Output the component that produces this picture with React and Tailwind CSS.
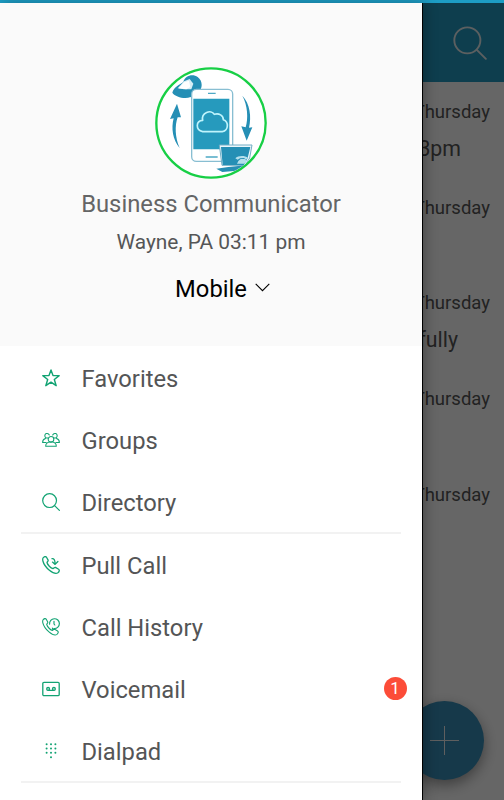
import React from 'react';

const strokeProps = {
  fill: 'none',
  stroke: 'currentColor',
  strokeLinecap: 'round',
  strokeLinejoin: 'round',
};

const StarIcon = () => (
  <svg className="size-[18px]" viewBox="0 0 18 18" strokeWidth="1.4" {...strokeProps}>
    <path d="M9 .9 11 6.6H17.2L12.3 10.5 14.2 16.7 9 13.1 3.8 16.7 5.7 10.5.8 6.6H7Z" />
  </svg>
);

const GroupsIcon = () => (
  <svg className="size-[18px]" viewBox="0 0 18 18" strokeWidth="1.05" {...strokeProps}>
    <circle cx="9" cy="8.3" r="2.8" />
    <path d="M6 6.9A2.3 2.3 0 1 1 7.3 4M10.7 4A2.3 2.3 0 1 1 12 6.9" />
    <path d="M3.7 15.2C3.7 12.8 4.8 11.6 7.2 11H10.8C13.2 11.6 14.3 12.8 14.3 15.2Z" />
    <path d="M4.2 11.5H.6C.6 9.6 1.5 8.1 3.6 7.6M13.8 11.5H17.4C17.4 9.6 16.5 8.1 14.4 7.6" />
  </svg>
);

const SearchIcon = ({ className, width = 1.2 }) => (
  <svg className={className} viewBox="0 0 18 18" strokeWidth={width} {...strokeProps}>
    <circle cx="7.6" cy="7.6" r="6.9" />
    <path d="m12.6 12.6 4.8 4.8" />
  </svg>
);

const handset =
  'M1.3 1.6C2.2.7 3.7.4 4.5 1.2L6.1 4.1C6.5 5 5.3 5.8 5 6.5 5.5 8.8 8.6 12 11 12.7 11.8 12.4 12.5 11.1 13.5 11.4L16.6 13.2C17.9 14.1 17.1 15.8 15.9 16.7 13.8 18.2 10.4 16.6 7.4 14.2 4.3 11.7 1.7 8.2.9 5 .6 3.7.6 2.4 1.3 1.6Z';

const PullCallIcon = () => (
  <svg className="size-[18px]" viewBox="0 0 18 18" strokeWidth="1.3" {...strokeProps}>
    <path d={handset} />
    <path d="M10 2.7C11.9 2.4 13 3.8 13.1 7.6M10.5 6.1 13.1 8.4 15.9 5.5" />
  </svg>
);

const HistoryIcon = () => (
  <svg className="size-[18px]" viewBox="0 0 18 18" strokeWidth="1.15" {...strokeProps}>
    <path d={handset} transform="scale(.94 .98)" />
    <path d="M7.6 6.1A4.9 4.9 0 1 1 12.3 10.5L10.8 11.4 10.4 10.1" />
    <path d="M12 3.2V6L12.8 7" />
  </svg>
);

const VoicemailIcon = () => (
  <svg className="size-[18px]" viewBox="0 0 18 18" strokeWidth="1.3" {...strokeProps}>
    <rect x=".8" y="2.4" width="16.4" height="13.2" rx="1.2" />
    <circle cx="6.1" cy="8.9" r="1.4" />
    <circle cx="11.9" cy="8.9" r="1.4" />
    <path d="M6.1 10.3H11.9" />
  </svg>
);

const DialpadIcon = () => (
  <svg className="size-[18px]" viewBox="0 0 18 18" fill="currentColor">
    {[2.2, 6.5, 10.8].map((y) =>
      [4.6, 9, 13.4].map((x) => <circle key={`${x}-${y}`} cx={x} cy={y} r="1" />)
    )}
    <circle cx="9" cy="15.2" r="1" />
  </svg>
);

const Avatar = () => (
  <svg className="size-28" viewBox="30 27 336 336">
    <defs>
      <clipPath id="avatar-clip">
        <circle cx="198" cy="195" r="160" />
      </clipPath>
    </defs>
    <circle cx="198" cy="195" r="164" fill="#fff" stroke="#17cf45" strokeWidth="7" />
    <g clipPath="url(#avatar-clip)">
      {/* speech bubbles */}
      <path d="M82 104C86 88 104 79 115 72 119 53 143 46 158 57 174 69 174 93 159 102L149 111 149 134 137 117C119 124 91 117 82 104Z" fill="#258fb5" />
      <path d="M117 70 134 63 145 77 139 94H117L98 91Z" fill="#d8eef5" />
      <path d="M117 73 132 68 136 87 124 94 101 91Z" fill="#fff" />
      {/* phone */}
      <rect x="140" y="94" width="123" height="216" rx="14" fill="#fff" stroke="#88bed2" strokeWidth="4" />
      <path d="M145 122H253V274H145Z" fill="#269abd" />
      <path d="M189 106H212M182 297H218" stroke="#4ea9c5" strokeWidth="4" />
      <path d="M173 221C151 216 152 188 173 187 168 164 198 153 208 169 222 164 235 173 235 185 252 191 251 218 232 221Z" fill="#269abd" stroke="#bff4fc" strokeWidth="5" strokeLinejoin="round" />
      {/* sync arrows */}
      <path d="M104 270C83 245 78 211 86 181L75 183 96 137 108 178 98 178C89 203 90 239 104 270Z" fill="#258fb5" />
      <path d="M292 113C315 136 320 177 312 209L322 208 305 248 289 205 302 208C310 180 308 143 292 113Z" fill="#258fb5" />
      {/* laptop */}
      <path d="M223 261H321L314 300 300 322H231Z" fill="#eaf7fb" stroke="#72adc5" strokeWidth="3" />
      <path d="M228 267H316L308 300 297 321H233Z" fill="#258fb5" />
      <path d="M214 332 250 327 302 322 276 338 232 342Z" fill="#278eb4" />
      <path d="M271 301C279 292 300 292 309 300L303 305 297 300 285 301 278 305ZM280 309 287 303H300L305 310 298 317H276Z" fill="#b4dfec" />
    </g>
  </svg>
);

const Row = ({ icon, label, badge }) => (
  <li className="flex flex-1 items-center pl-[41.5px] pr-[15.5px]">
    <span className="mt-px text-[#12a373]">{icon}</span>
    <span className="ml-[22px] mt-[3px] text-[23.75px] leading-7 text-[#545556]">{label}</span>
    {badge && (
      <span className="ml-auto flex size-[23px] items-center justify-center rounded-full bg-[#fc4c38] text-[17px] leading-none text-white">
        {badge}
      </span>
    )}
  </li>
);

const messages = [
  { day: 'Thursday', text: '3pm', pad: 'pr-[43px]' },
  { day: 'Thursday' },
  { day: 'Thursday', text: 'fully', pad: 'pr-[46px]' },
  { day: 'Thursday' },
  { day: 'Thursday' },
];

export default function App() {
  return (
    <div className="relative h-[800px] w-[504px] overflow-hidden bg-white font-['Roboto',sans-serif]">
      {/* Chat list behind the drawer */}
      <div className="h-[3px] bg-[#1d9dc5]" />
      <header className="flex h-[79px] items-center justify-end bg-[#239cc3] pr-[17.5px] text-[#e5eef0]">
        <SearchIcon className="size-[34px]" width={1} />
      </header>
      <ul className="pt-4 text-right text-[#555]">
        {messages.map((m, i) => (
          <li key={i} className="h-[95.7px]">
            <p className="pr-[14px] text-[18.5px] leading-7">{m.day}</p>
            {m.text && <p className={`mt-[9px] text-[21.3px] leading-7 ${m.pad}`}>{m.text}</p>}
          </li>
        ))}
      </ul>
      <button className="absolute left-[405px] top-[701px] flex size-[79px] items-center justify-center rounded-full bg-[#378eb8] shadow-[0_5px_14px_rgba(0,0,0,0.4)]">
        <svg className="size-[29px] text-[#eee]" viewBox="0 0 29 29" stroke="currentColor">
          <path d="M14.5 0V29M0 14.5H29" />
        </svg>
      </button>

      {/* Scrim */}
      <div className="absolute inset-x-0 bottom-0 top-[3px] bg-black/60" />

      {/* Drawer */}
      <aside className="absolute bottom-0 left-0 top-[3px] w-[422px] bg-white shadow-[1px_0_0_#000,3px_0_12px_rgba(0,0,0,0.3)]">
        <div className="flex h-[343px] flex-col items-center bg-[#fafafa] pt-16">
          <Avatar />
          <h1 className="mt-[11px] text-[23.8px] leading-7 text-[#646566]">Business Communicator</h1>
          <p className="mt-3 text-[20.9px] leading-6 text-[#555657]">Wayne, PA 03:11 pm</p>
          <button className="mt-[21px] flex items-center gap-2 pl-[23px] text-[23.75px] leading-7 text-black">
            Mobile
            <svg className="mb-1 h-[9px] w-[15px]" viewBox="0 0 15 9" fill="none" stroke="currentColor" strokeWidth="1.1">
              <path d="M.7.8 7.5 7.7 14.3.8" />
            </svg>
          </button>
        </div>
        <nav>
          <ul className="flex h-[186px] flex-col">
            <Row icon={<StarIcon />} label="Favorites" />
            <Row icon={<GroupsIcon />} label="Groups" />
            <Row icon={<SearchIcon className="size-[18px]" />} label="Directory" />
          </ul>
          <hr className="mx-[21px] border-t-2 border-[#f2f2f2]" />
          <ul className="flex h-[247px] flex-col">
            <Row icon={<PullCallIcon />} label="Pull Call" />
            <Row icon={<HistoryIcon />} label="Call History" />
            <Row icon={<VoicemailIcon />} label="Voicemail" badge="1" />
            <Row icon={<DialpadIcon />} label="Dialpad" />
          </ul>
          <hr className="mx-[21px] border-t-2 border-[#f2f2f2]" />
        </nav>
      </aside>
    </div>
  );
}
